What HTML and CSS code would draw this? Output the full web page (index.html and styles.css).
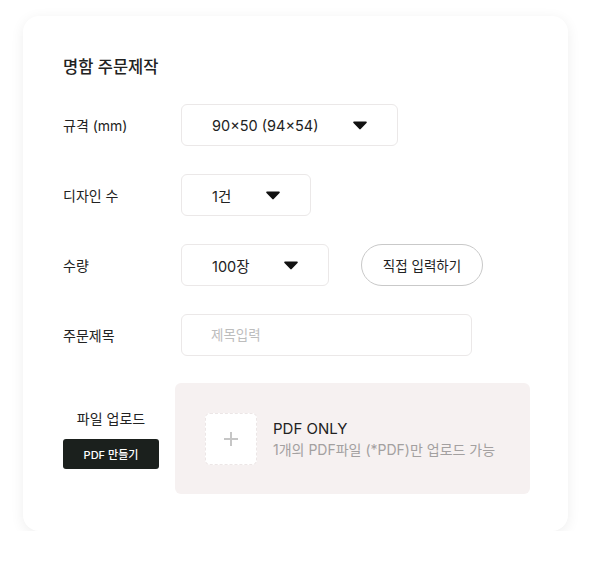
FILE: index.html
```html
<!DOCTYPE html>
<html lang="ko">
<head>
  <meta charset="UTF-8">
  <meta name="viewport" content="width=device-width, initial-scale=1.0">
  <title>명함 주문제작</title>
  <link rel="stylesheet" href="styles.css">
</head>
<body>
  <!-- 주문 카드 -->
  <section class="order-card">
    <h2 class="order-title">명함 주문제작</h2>

    <div class="form-row">
      <span class="form-label">규격 (mm)</span>
      <div class="select select-size">
        <span>90×50 (94×54)</span>
        <svg class="caret" viewBox="0 0 14 9"><path d="M1.2 0.5h11.6c0.9 0 1.3 1 0.7 1.6L7.7 8.1c-0.4 0.4-1 0.4-1.4 0L0.5 2.1C-0.1 1.5 0.3 0.5 1.2 0.5z"/></svg>
      </div>
    </div>

    <div class="form-row">
      <span class="form-label">디자인 수</span>
      <div class="select select-design">
        <span>1건</span>
        <svg class="caret" viewBox="0 0 14 9"><path d="M1.2 0.5h11.6c0.9 0 1.3 1 0.7 1.6L7.7 8.1c-0.4 0.4-1 0.4-1.4 0L0.5 2.1C-0.1 1.5 0.3 0.5 1.2 0.5z"/></svg>
      </div>
    </div>

    <div class="form-row">
      <span class="form-label">수량</span>
      <div class="select select-qty">
        <span>100장</span>
        <svg class="caret" viewBox="0 0 14 9"><path d="M1.2 0.5h11.6c0.9 0 1.3 1 0.7 1.6L7.7 8.1c-0.4 0.4-1 0.4-1.4 0L0.5 2.1C-0.1 1.5 0.3 0.5 1.2 0.5z"/></svg>
      </div>
      <button type="button" class="pill-btn">직접 입력하기</button>
    </div>

    <div class="form-row">
      <span class="form-label">주문제목</span>
      <input type="text" class="text-input" placeholder="제목입력">
    </div>

    <!-- 파일 업로드 -->
    <div class="upload-row">
      <div class="upload-side">
        <span class="upload-label">파일 업로드</span>
        <button type="button" class="make-btn">PDF 만들기</button>
      </div>
      <div class="upload-box">
        <div class="plus-box"><span class="plus"></span></div>
        <div class="upload-text">
          <p class="upload-main">PDF ONLY</p>
          <p class="upload-sub">1개의 PDF파일 (*PDF)만 업로드 가능</p>
        </div>
      </div>
    </div>
  </section>
</body>
</html>
```

FILE: styles.css
```css
* {
  box-sizing: border-box;
}

body {
  margin: 0;
  background: #ffffff;
  font-family: 'Inter', 'Noto Sans CJK KR', sans-serif;
  color: #222222;
}

/* 카드 */
.order-card {
  width: 545px;
  height: 515px;
  margin: 16px 0 0 23px;
  padding: 40px 38px 38px 40px;
  background: #ffffff;
  border-radius: 16px;
  box-shadow: 0 3px 14px rgba(0, 0, 0, 0.07);
}

.order-title {
  margin: 0 0 26px;
  font-size: 16.5px;
  line-height: 22px;
  font-weight: 500;
  color: #222222;
}

/* 폼 행 */
.form-row {
  display: flex;
  align-items: center;
  height: 42px;
  margin-bottom: 28px;
}

.form-label {
  width: 118px;
  flex: none;
  font-size: 14px;
  color: #222222;
}

.select {
  display: flex;
  align-items: center;
  justify-content: space-between;
  height: 42px;
  padding: 0 30px;
  border: 1px solid #ebe8e8;
  border-radius: 6px;
  font-size: 14.5px;
  color: #222222;
}

.select-size { width: 217px; }
.select-design { width: 130px; }
.select-qty { width: 148px; }

.caret {
  width: 14px;
  height: 9px;
  fill: #111111;
}

.pill-btn {
  width: 122px;
  height: 42px;
  margin-left: 32px;
  background: #ffffff;
  border: 1px solid #c9c9c9;
  border-radius: 21px;
  font-family: inherit;
  font-size: 13.5px;
  color: #222222;
}

.text-input {
  width: 291px;
  height: 42px;
  padding: 0 29px;
  border: 1px solid #ebe8e8;
  border-radius: 6px;
  font-family: inherit;
  font-size: 13.5px;
  outline: none;
}

.text-input::placeholder {
  color: #bdbdbd;
}

/* 업로드 */
.upload-row {
  display: flex;
  align-items: center;
  margin-top: -1px;
}

.upload-side {
  width: 112px;
  flex: none;
  display: flex;
  flex-direction: column;
  align-items: flex-start;
}

.upload-label {
  width: 96px;
  text-align: center;
  font-size: 14px;
  line-height: 20px;
  color: #222222;
}

.make-btn {
  width: 96px;
  height: 30px;
  margin-top: 10px;
  background: #1b201d;
  border: none;
  border-radius: 3px;
  color: #ffffff;
  font-family: inherit;
  font-size: 11px;
  font-weight: 500;
}

.upload-box {
  display: flex;
  align-items: center;
  flex: none;
  width: 355px;
  height: 111px;
  padding-left: 30px;
  background: #f6f1f1;
  border-radius: 6px;
}

.plus-box {
  position: relative;
  width: 52px;
  height: 52px;
  flex: none;
  background: #ffffff;
  border: 1px dashed #ece6e6;
  border-radius: 5px;
}

.plus::before,
.plus::after {
  content: "";
  position: absolute;
  left: 50%;
  top: 50%;
  background: #c6c6c6;
}

.plus::before {
  width: 14px;
  height: 2px;
  margin: -1px 0 0 -7px;
}

.plus::after {
  width: 2px;
  height: 14px;
  margin: -7px 0 0 -1px;
}

.upload-text {
  margin-left: 16px;
}

.upload-text p {
  margin: 0;
}

.upload-main {
  font-size: 15px;
  line-height: 22px;
  color: #222222;
}

.upload-sub {
  font-size: 14px;
  line-height: 20px;
  color: #a3a0a0;
}
```
